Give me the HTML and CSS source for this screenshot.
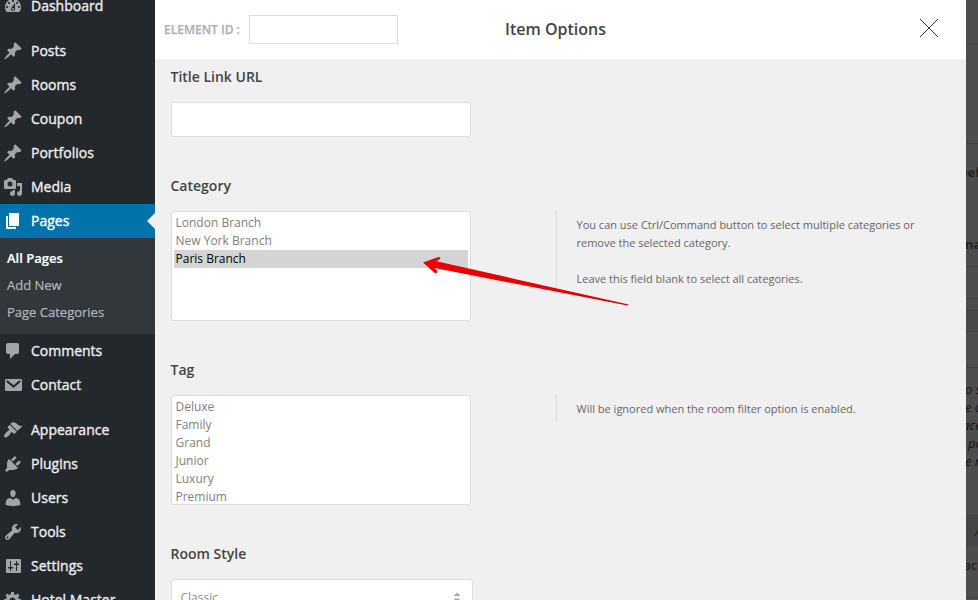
FILE: index.html
```html
<!DOCTYPE html>
<html lang="en">
<head>
<meta charset="utf-8">
<title>Item Options</title>
<link rel="stylesheet" href="styles.css">
</head>
<body>
<div class="app">
  <nav class="sidebar">
    <a class="item"><svg class="icon" viewBox="0 0 20 20"><path fill-rule="evenodd" d="M3.76 16h12.48c1.1-1.37 1.76-3.11 1.76-5 0-4.42-3.58-8-8-8s-8 3.58-8 8c0 1.89.66 3.63 1.76 5zM10 4c.55 0 1 .45 1 1s-.45 1-1 1-1-.45-1-1 .45-1 1-1zM6 6c.55 0 1 .45 1 1s-.45 1-1 1-1-.45-1-1 .45-1 1-1zm8 0c.55 0 1 .45 1 1s-.45 1-1 1-1-.45-1-1 .45-1 1-1zm-5.37 5.55L12 7v6c0 1.1-.9 2-2 2s-2-.9-2-2c0-.57.24-1.08.63-1.45zM4 10c.55 0 1 .45 1 1s-.45 1-1 1-1-.45-1-1 .45-1 1-1zm12 0c.55 0 1 .45 1 1s-.45 1-1 1-1-.45-1-1 .45-1 1-1zm-5 3c0-.55-.45-1-1-1s-1 .45-1 1 .45 1 1 1 1-.45 1-1z"/></svg><span>Dashboard</span></a>
    <div class="separator"></div>
    <a class="item"><svg class="icon" viewBox="0 0 20 20"><path id="pin" d="M10.44 3.02l1.82-1.82 6.36 6.35-1.83 1.82c-1.05-.68-2.48-.57-3.41.36l-.75.75c-.92.93-1.04 2.35-.35 3.41l-1.83 1.82-2.41-2.41-2.8 2.79c-.42.42-3.38 2.71-3.8 2.29s1.86-3.39 2.28-3.81l2.79-2.79L4.1 9.36l1.83-1.82c1.05.69 2.48.57 3.4-.36l.75-.75c.93-.92 1.05-2.35.36-3.41z"/></svg><span>Posts</span></a>
    <a class="item"><svg class="icon" viewBox="0 0 20 20"><use href="#pin"/></svg><span>Rooms</span></a>
    <a class="item"><svg class="icon" viewBox="0 0 20 20"><use href="#pin"/></svg><span>Coupon</span></a>
    <a class="item"><svg class="icon" viewBox="0 0 20 20"><use href="#pin"/></svg><span>Portfolios</span></a>
    <a class="item"><svg class="icon" viewBox="0 0 20 20"><path d="M13 11V4c0-.55-.45-1-1-1h-1.67L9 1H5L3.67 3H2c-.55 0-1 .45-1 1v7c0 .55.45 1 1 1h10c.55 0 1-.45 1-1zM7 4.5c1.38 0 2.5 1.12 2.5 2.5S8.38 9.5 7 9.5 4.5 8.38 4.5 7 5.62 4.5 7 4.5zM14 6h5v10.5c0 1.38-1.12 2.5-2.5 2.5S14 17.88 14 16.5s1.12-2.5 2.5-2.5c.17 0 .34.02.5.05V9h-3V6zm-4 8.05V13h2v3.5c0 1.38-1.12 2.5-2.5 2.5S7 17.88 7 16.5 8.12 14 9.5 14c.17 0 .34.02.5.05z"/></svg><span>Media</span></a>
    <a class="item current"><svg class="icon" viewBox="0 0 20 20"><path d="M6 15V2h10v13H6zm-1 1h8v2H3V5h2v11z"/></svg><span>Pages</span></a>
    <div class="submenu">
      <a class="sub active">All Pages</a>
      <a class="sub">Add New</a>
      <a class="sub">Page Categories</a>
    </div>
    <a class="item"><svg class="icon" viewBox="0 0 20 20"><path d="M5 2h9c1.1 0 2 .9 2 2v7c0 1.1-.9 2-2 2h-2l-5 5v-5H5c-1.1 0-2-.9-2-2V4c0-1.1.9-2 2-2z"/></svg><span>Comments</span></a>
    <a class="item"><svg class="icon" viewBox="0 0 20 20"><rect x="2" y="4" width="17" height="12" rx="1.2"/><path class="cut" d="M3.8 6l6.7 5.6L17.200 6"/></svg><span>Contact</span></a>
    <div class="separator"></div>
    <a class="item"><svg class="icon" viewBox="0 0 20 20"><path d="M14.480 11.060L7.410 3.990l1.500-1.500c.5-.56 2.300-.47 3.510.32 1.210.8 1.430 1.280 2.910 2.100 1.180.64 2.450 1.260 4.450.85zm-.71.71L6.700 4.700 4.930 6.470c-.39.39-.39 1.020 0 1.410l1.060 1.060c.39.39.39 1.030 0 1.420-.6.6-1.430 1.110-2.210 1.690-.35.26-.7.53-1.010.84C1.430 14.230.4 16.080 1.400 17.070c.99 1 2.840-.03 4.180-1.360.31-.31.58-.66.85-1.020.57-.78 1.080-1.610 1.690-2.210.39-.39 1.020-.39 1.410 0l1.060 1.060c.39.39 1.020.39 1.410 0z"/></svg><span>Appearance</span></a>
    <a class="item"><svg class="icon" viewBox="0 0 20 20"><path d="M13.110 4.360L9.870 7.600 8 5.730l3.240-3.240c.35-.34 1.050-.2 1.560.32.52.51.66 1.210.31 1.550zm-8 1.770l.91-1.120 9.010 9.010-1.190.84c-.71.71-2.630 1.160-3.820 1.160H6.140L4.900 17.260c-.59.59-1.540.59-2.120 0-.59-.58-.59-1.530 0-2.120l1.240-1.240v-3.880c0-1.130.4-3.190 1.090-3.890zm7.260 3.970l3.240-3.240c.34-.35 1.040-.21 1.550.31.52.51.66 1.210.31 1.550l-3.240 3.250z"/></svg><span>Plugins</span></a>
    <a class="item"><svg class="icon" viewBox="0 0 20 20"><path d="M10 9.250c-2.270 0-2.730-3.440-2.730-3.440C7 4.020 7.820 2 9.970 2c2.160 0 2.980 2.020 2.710 3.810 0 0-.41 3.440-2.680 3.440zm0 2.570L12.720 10c2.390 0 4.520 2.330 4.520 4.530v2.490s-3.650 1.130-7.240 1.130c-3.650 0-7.240-1.130-7.240-1.130v-2.490c0-2.250 1.940-4.480 4.470-4.480z"/></svg><span>Users</span></a>
    <a class="item"><svg class="icon" viewBox="0 0 20 20"><path d="M16.680 9.770c-1.340 1.340-3.300 1.670-4.950.99l-5.410 6.520c-.99.99-2.590.99-3.580 0s-.99-2.590 0-3.570l6.520-5.420c-.68-1.650-.35-3.610.99-4.950 1.280-1.280 3.120-1.620 4.720-1.060l-2.890 2.890 2.820 2.820 2.860-2.870c.53 1.580.18 3.390-1.080 4.650zM3.810 16.210c.4.39 1.040.39 1.430 0 .4-.4.4-1.040 0-1.430-.39-.4-1.030-.4-1.430 0-.39.39-.39 1.030 0 1.430z"/></svg><span>Tools</span></a>
    <a class="item"><svg class="icon" viewBox="0 0 20 20"><path fill-rule="evenodd" d="M4 3h13a1 1 0 0 1 1 1v12a1 1 0 0 1-1 1H4a1 1 0 0 1-1-1V4a1 1 0 0 1 1-1zM7 5v6H5v1.500h2V15h1v-2.500h2V11H8V5zM13 5v2.500h-2V9h2v6h1V9h2V7.500h-2V5z"/></svg><span>Settings</span></a>
    <a class="item"><svg class="icon" viewBox="0 0 20 20"><path d="M18 12h-2.180c-.17.7-.44 1.350-.81 1.930l1.540 1.540-2.100 2.100-1.540-1.540c-.58.36-1.230.63-1.910.79V19H8v-2.180c-.68-.16-1.330-.43-1.910-.79l-1.540 1.540-2.120-2.120 1.540-1.540c-.36-.58-.63-1.230-.79-1.910H1V9.030h2.170c.16-.7.44-1.350.8-1.940L2.430 5.550l2.100-2.100 1.540 1.540c.58-.37 1.240-.64 1.930-.81V2h3v2.180c.68.16 1.330.43 1.910.79l1.540-1.540 2.120 2.120-1.540 1.540c.36.59.64 1.240.8 1.940H18V12zm-8.500 1.500c1.660 0 3-1.340 3-3s-1.340-3-3-3-3 1.340-3 3 1.340 3 3 3z"/></svg><span>Hotel Master</span></a>
  </nav>

  <main class="modal">
    <header class="head">
      <div class="element">
        <label class="element-label">ELEMENT ID :</label>
        <div class="element-input"></div>
      </div>
      <h1 class="title">Item Options</h1>
      <svg class="close" viewBox="0 0 20 20"><path d="M1 1l18 18M19 1L1 19"/></svg>
    </header>
    <section class="field">
      <h2 class="label">Title Link URL</h2>
      <div class="row"><div class="text-input"></div></div>
    </section>
    <section class="field">
      <h2 class="label">Category</h2>
      <div class="row">
        <ul class="list">
          <li>London Branch</li>
          <li>New York Branch</li>
          <li class="selected">Paris Branch</li>
        </ul>
        <div class="help">You can use Ctrl/Command button to select multiple categories or<br>remove the selected category.<br><br>Leave this field blank to select all categories.</div>
      </div>
    </section>
    <section class="field">
      <h2 class="label">Tag</h2>
      <div class="row">
        <ul class="list">
          <li>Deluxe</li>
          <li>Family</li>
          <li>Grand</li>
          <li>Junior</li>
          <li>Luxury</li>
          <li>Premium</li>
        </ul>
        <div class="help">Will be ignored when the room filter option is enabled.</div>
      </div>
    </section>
    <section class="field">
      <h2 class="label">Room Style</h2>
      <div class="row">
        <div class="combo"><span>Classic</span><svg class="arrows" viewBox="0 0 8 12"><path d="M4 1.500l3.500 3.500h-7zM.5 7.500h7L4 11z"/></svg></div>
      </div>
    </section>
  </main>

  <aside class="backdrop">
    <div class="strip s1"></div>
    <div class="strip s2"></div>
    <div class="strip s3"><span class="bold def">Def</span><span class="bold nal">nal</span></div>
    <div class="strip s4"></div>
    <div class="strip s5"></div>
    <div class="strip s6"></div>
    <div class="strip s7"></div>
    <div class="strip s8"><span>o s</span><span>e o</span><span class="ace">ace</span><span class="shift">po</span><span>e r</span></div>
    <div class="strip s9"><span>A</span></div>
    <div class="strip s10"><span>act</span></div>
  </aside>

  <svg class="pointer" viewBox="0 0 210 54">
    <defs><linearGradient id="red" x1="0" y1="0" x2="0" y2="1"><stop offset="0" stop-color="#f00000"/><stop offset="1" stop-color="#d90000"/></linearGradient></defs>
    <path fill="url(#red)" d="M3 12.400L18.300 7q1.700-.4 1.900.8t-1.200 1.900L16.500 11.300L208.500 54.500L207.500 55.500L14.500 18L17 20.600q.9 1.400-.3 2.200t-2.500-.4z"/>
  </svg>
</div>
</body>
</html>
```
FILE: styles.css
```css
* { box-sizing: border-box; }
body { margin: 0; overflow: hidden; font-family: "Open Sans", sans-serif; }
.app { position: relative; display: flex; width: 978px; height: 600px; overflow: hidden; background: #4d4d4d; }

.sidebar { width: 155px; flex: none; height: 628px; margin-top: -11px; background: #23282d; }
.item { display: flex; align-items: center; gap: 8px; height: 34px; padding-left: 3px; color: #eee; font-size: 14px; line-height: 34px; font-weight: 500; -webkit-text-stroke: .35px currentColor; white-space: nowrap; }
.icon { width: 20px; height: 20px; flex: none; fill: #a0a5aa; }
.cut { fill: none; stroke: #23282d; stroke-width: 2; }
.separator { height: 11px; }
.current { position: relative; background: #0073aa; color: #fff; }
.current .icon { fill: #fff; }
.current::after { content: ""; position: absolute; right: 0; top: 9px; border: 8px solid transparent; border-left-width: 0; border-right-color: #f0f0f0; }
.submenu { height: 96px; padding: 7px 0 0 7px; background: #32373c; }
.sub { display: block; height: 27px; line-height: 27px; font-size: 13px; color: #b4b9be; -webkit-text-stroke: .2px currentColor; }
.sub.active { color: #fff; font-weight: 600; }

.modal { width: 811px; flex: none; height: 640px; background: #f0f0f0; }
.head { display: grid; grid-template-columns: 1fr auto 1fr; align-items: center; height: 59px; padding: 0 27px 0 9px; background: #fff; }
.element { display: flex; align-items: center; gap: 9px; }
.element-label { font-size: 12px; font-weight: 600; color: #b0b0b0; -webkit-text-stroke: .25px currentColor; white-space: nowrap; }
.element-input { width: 149px; height: 29px; border: 1px solid #dcdcdc; background: #fff; }
.title { margin: 0 -4px 2px 0; padding-left: 4px; font-size: 16px; font-weight: 600; color: #444; }
.close { justify-self: end; width: 20px; height: 20px; margin-bottom: 3px; fill: none; stroke: #333; stroke-width: 1; }

.field { padding: 7px 0 0 16px; margin-bottom: 31px; }
.label { margin: 0 0 15px -.5px; font-size: 14px; line-height: 21px; font-weight: 600; color: #444; }
.row { display: flex; align-items: flex-start; }
.text-input { width: 300px; height: 35px; border: 1px solid #ddd; border-radius: 3px; background: #fff; }
.list { width: 300px; height: 110px; margin: 0 85px 0 0; padding: 2px; flex: none; overflow: hidden; list-style: none; border: 1px solid #ddd; border-radius: 3px; background: #fff; }
.list li { height: 18px; padding-left: 1.500px; font-size: 12px; line-height: 18px; color: #808080; }
.list .selected { background: #d4d4d4; color: #000; }
.help { padding: 5px 0 5px 19.500px; border-left: 1px solid #dadada; font-size: 11px; line-height: 18px; color: #666; white-space: nowrap; }
.combo { display: flex; align-items: center; justify-content: space-between; width: 302px; height: 36px; padding: 0 11px 0 8.500px; border: 1px solid #ddd; border-radius: 3px; background: #fff; font-size: 12px; color: #8a8a8a; }
.arrows { width: 8px; height: 12px; fill: #aaa; }

.backdrop { width: 12px; flex: none; overflow: hidden; background: #4d4d4d; color: #222; font-size: 13px; }
.strip { border-bottom: 1px solid #424242; white-space: nowrap; overflow: hidden; }
.strip span { display: block; }
.s1 { height: 45px; }
.s2 { height: 99px; }
.s3 { height: 123px; padding-top: 19px; }
.s4 { height: 32px; }
.s5 { height: 12px; }
.s6 { height: 21px; background: #494949; }
.s7 { height: 36px; }
.s8 { height: 148px; padding-top: 12px; font-style: italic; line-height: 18px; color: #141414; }
.s8 span { margin-left: -1px; }
.s8 .ace { margin-left: -4px; }
.s9 { height: 30px; padding: 6px 0 0 9px; background: #464646; font-style: italic; }
.s10 { height: 52px; padding-top: 11px; font-weight: 600; font-size: 12px; }
.s10 span { margin-left: -2px; }
.strip .bold { height: 72px; line-height: 18px; font-weight: 700; margin-left: -8px; }
.strip .nal { margin-left: -1px; }
.strip .shift { margin-left: 2px; }

.pointer { position: absolute; left: 420px; top: 250px; width: 210px; height: 54px; overflow: visible; }
```
